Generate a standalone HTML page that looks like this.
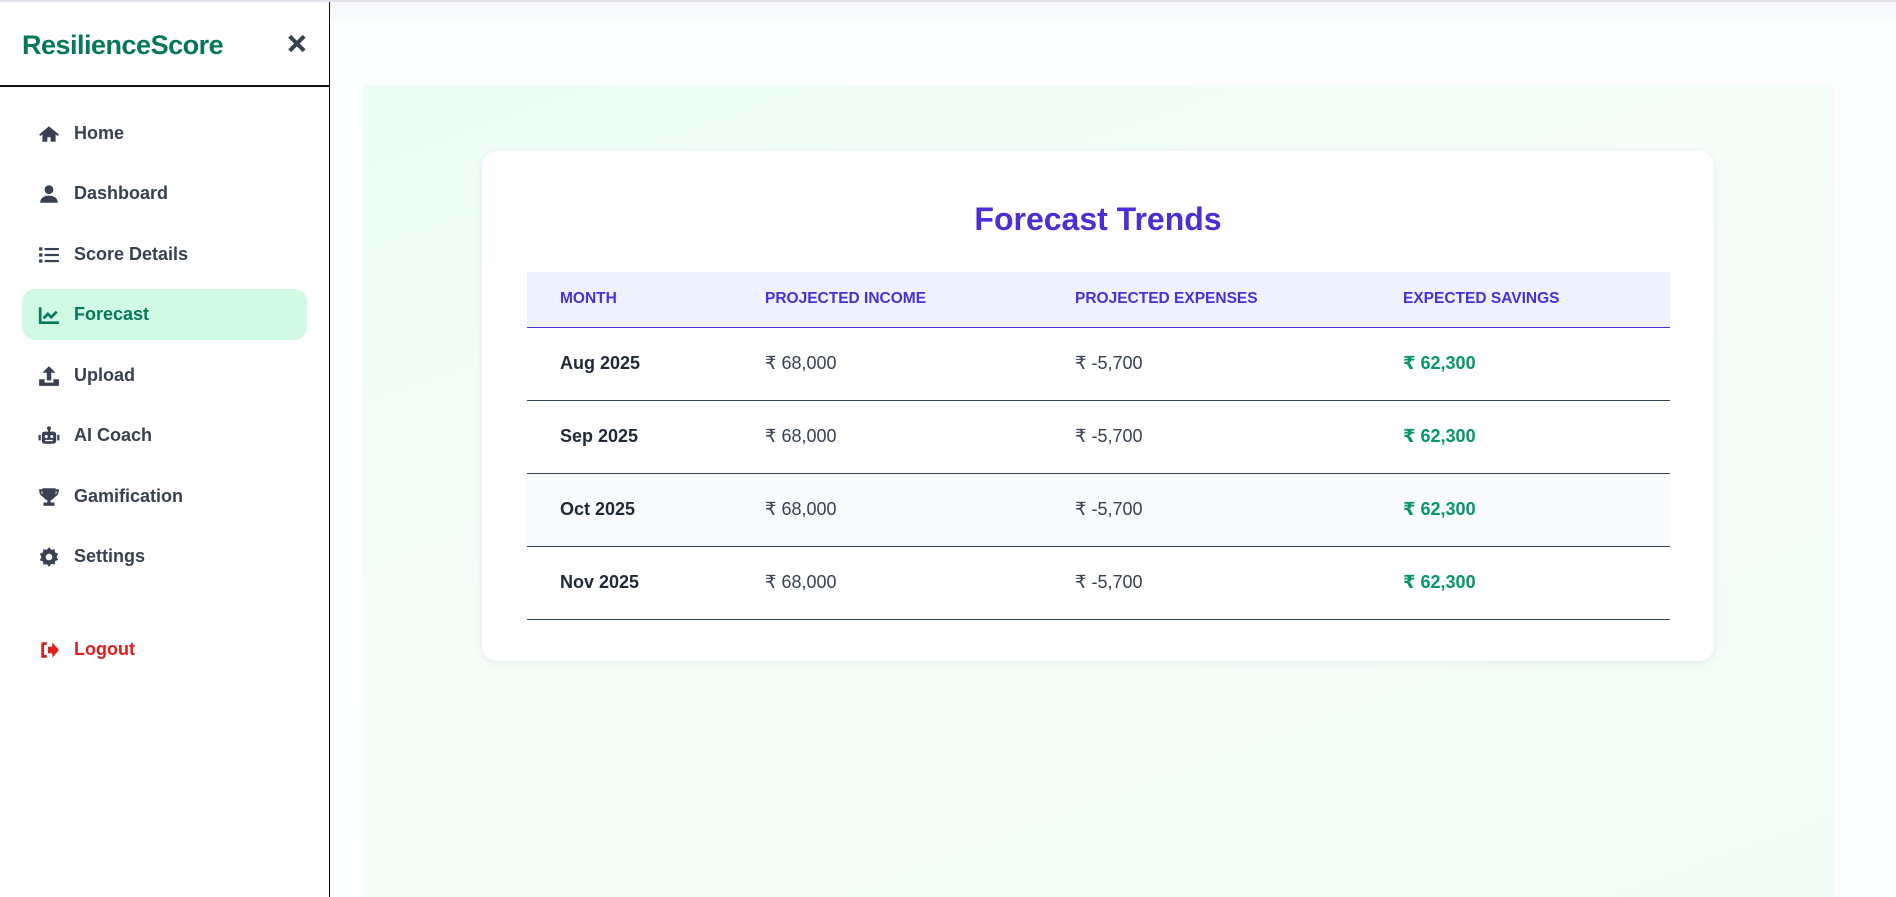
<!DOCTYPE html>
<html><head><meta charset="utf-8"><style>
*{box-sizing:border-box;margin:0;padding:0}
body{width:1896px;height:897px;overflow:hidden;background:#f8f9fb;font-family:"Liberation Sans","DejaVu Sans",sans-serif;position:relative}
.topbar{position:absolute;left:0;top:0;width:1896px;height:2px;background:#e3e0ea}
.side{position:absolute;left:0;top:2px;width:330px;height:895px;background:#fff;border-right:1.5px solid #111}
.logo{position:absolute;left:22px;top:28px;font-size:27px;font-weight:bold;color:#047857;letter-spacing:-0.5px}
.close{position:absolute;left:286px;top:27px;font-size:26px;font-weight:900;color:#374151;-webkit-text-stroke:1.5px #374151}
.hr{position:absolute;left:0;top:83px;width:329px;height:1.5px;background:#111}
.nav{position:absolute;left:22px;width:285px;height:51px;border-radius:13px;display:flex;align-items:center;padding-left:16px;font-size:18px;font-weight:bold;color:#374151}
.nav svg{width:22px;height:22px;margin-right:14px}
.nav.act{background:#d1fae5;color:#047857}
.nav.out{color:#e11d1d}
.main{position:absolute;left:331px;top:19px;width:1565px;height:878px;background:#fcfefd}
.mint{position:absolute;left:363px;top:85px;width:1471px;height:812px;background:linear-gradient(160deg,#ecfdf5,#f6fdf9 50%,#f0fdf6)}
.card{position:absolute;left:482px;top:151px;width:1232px;height:510px;background:#fff;border-radius:15px;box-shadow:0 2px 8px rgba(0,0,0,.08)}
h1{position:absolute;left:0;width:100%;top:50px;text-align:center;font-size:32px;color:#4a2ed6;font-weight:bold}
table{position:absolute;left:45px;top:121px;width:1143px;border-collapse:collapse}
th{background:#eef2ff;color:#4a2ed6;font-size:15.5px;text-align:left;height:55px;border-bottom:1.5px solid #4a2ed6;font-weight:bold}
td{height:73px;border-bottom:1.5px solid #334155;font-size:18px;color:#374151}
td:first-child,th:first-child{padding-left:33px}
td.b{font-weight:bold;color:#1f2937}
td.g{font-weight:bold;color:#059669}
tr.alt td{background:#f8fafc}
</style></head><body>
<div class="topbar"></div>
<div class="main"></div>
<div class="mint"></div>
<div class="side">
<div class="logo">ResilienceScore</div>
<div class="close">✕</div>
<div class="hr"></div>
<div class="nav" style="top:106px"><svg viewBox="0 0 20 20"><path d="M10 3L1 10.5l1.2 1.3L4 10.4V17h4.5v-4h3v4H16v-6.6l1.8 1.4 1.2-1.3z" fill="#374151"/></svg>Home</div>
<div class="nav" style="top:166px"><svg viewBox="0 0 20 20"><circle cx="10" cy="6" r="4" fill="#374151"/><path d="M2 18c0-4 3-6.5 8-6.5s8 2.5 8 6.5z" fill="#374151"/></svg>Dashboard</div>
<div class="nav" style="top:227px"><svg viewBox="0 0 20 20" fill="#374151"><rect x="1" y="3" width="3" height="3"/><rect x="1" y="8.5" width="3" height="3"/><rect x="1" y="14" width="3" height="3"/><rect x="6" y="3.6" width="13" height="2"/><rect x="6" y="9" width="13" height="2"/><rect x="6" y="14.5" width="13" height="2"/></svg>Score Details</div>
<div class="nav act" style="top:287px"><svg viewBox="0 0 20 20" fill="none" stroke="#047857" stroke-width="2.4"><path d="M2 3v14h17"/><path d="M5 13l4-4 3 3 5-5"/></svg>Forecast</div>
<div class="nav" style="top:348px"><svg viewBox="0 0 20 20" fill="#374151"><path d="M10 1l-6 6h4v7h4V7h4z"/><path d="M1 13h5v3h8v-3h5v6H1z"/></svg>Upload</div>
<div class="nav" style="top:408px"><svg viewBox="0 0 20 20" fill="#374151"><circle cx="10" cy="3" r="1.8"/><rect x="9" y="3" width="2" height="3"/><rect x="3.5" y="6" width="13" height="11" rx="2.5"/><rect x="0.5" y="9" width="2" height="5"/><rect x="17.5" y="9" width="2" height="5"/><circle cx="7.5" cy="10.5" r="1.4" fill="#fff"/><circle cx="12.5" cy="10.5" r="1.4" fill="#fff"/><rect x="6.5" y="13.5" width="7" height="1.2" fill="#fff"/></svg>AI Coach</div>
<div class="nav" style="top:469px"><svg viewBox="0 0 20 20" fill="#374151"><path d="M4 2h12v5a6 6 0 0 1-12 0z"/><path d="M1 3h3v2H3c0 2 1 3 2 3.5v1.5C2.5 9.5 1 7 1 3zM19 3h-3v2h1c0 2-1 3-2 3.5v1.5c2.5-.5 4-3 4-7z"/><rect x="8.5" y="12" width="3" height="3"/><rect x="5" y="15" width="10" height="3"/></svg>Gamification</div>
<div class="nav" style="top:529px"><svg viewBox="0 0 20 20"><path d="M10 1l2 2.5 3-.7.5 3 2.8 1.3-1.4 2.7 1.4 2.8-2.8 1.2-.5 3-3-.6L10 19l-2-2.5-3 .6-.5-3-2.8-1.2 1.4-2.8L1.7 7.1l2.8-1.3.5-3 3 .7z" fill="#374151"/><circle cx="10" cy="10" r="3" fill="#fff"/></svg>Settings</div>
<div class="nav out" style="top:622px"><svg viewBox="0 0 20 20" fill="#e11d1d"><path d="M8 3H3v14h5v-2.5H5.5v-9H8z"/><path d="M9 7h4V3l6 7-6 7v-4H9z"/></svg>Logout</div>
</div>
<div class="card">
<h1>Forecast Trends</h1>
<table>
<tr><th style="width:238px">MONTH</th><th style="width:310px">PROJECTED INCOME</th><th style="width:328px">PROJECTED EXPENSES</th><th>EXPECTED SAVINGS</th></tr>
<tr><td class="b">Aug 2025</td><td>₹ 68,000</td><td>₹ -5,700</td><td class="g">₹ 62,300</td></tr>
<tr><td class="b">Sep 2025</td><td>₹ 68,000</td><td>₹ -5,700</td><td class="g">₹ 62,300</td></tr>
<tr class="alt"><td class="b">Oct 2025</td><td>₹ 68,000</td><td>₹ -5,700</td><td class="g">₹ 62,300</td></tr>
<tr><td class="b">Nov 2025</td><td>₹ 68,000</td><td>₹ -5,700</td><td class="g">₹ 62,300</td></tr>
</table>
</div>
</body></html>
